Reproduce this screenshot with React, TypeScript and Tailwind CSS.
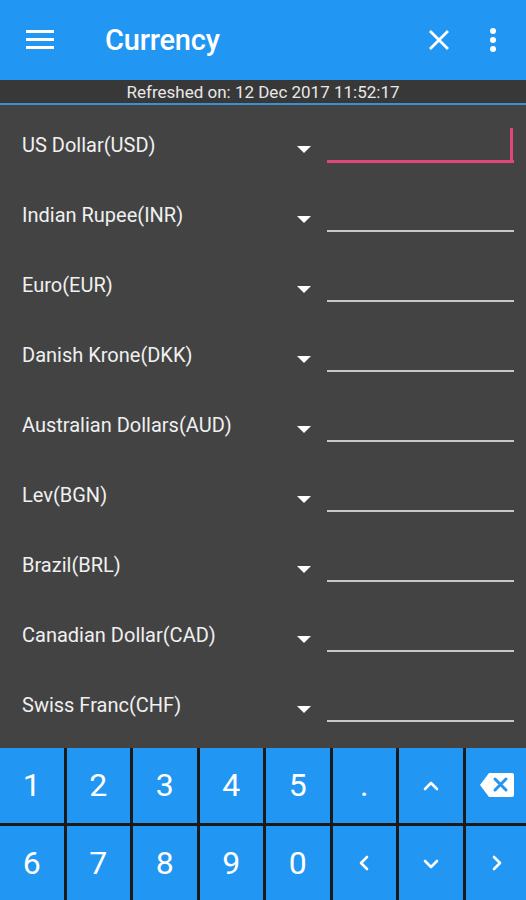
import React from 'react';

const currencies = [
  'US Dollar(USD)',
  'Indian Rupee(INR)',
  'Euro(EUR)',
  'Danish Krone(DKK)',
  'Australian Dollars(AUD)',
  'Lev(BGN)',
  'Brazil(BRL)',
  'Canadian Dollar(CAD)',
  'Swiss Franc(CHF)',
];

function Chevron({ dir }: { dir: 'up' | 'down' | 'left' | 'right' }) {
  const paths = {
    up: 'M4 14 L10 8 L16 14',
    down: 'M4 8 L10 14 L16 8',
    left: 'M13 4 L7 10 L13 16',
    right: 'M7 4 L13 10 L7 16',
  };
  return (
    <svg width="20" height="20" viewBox="0 0 20 20" fill="none">
      <path d={paths[dir]} stroke="white" strokeWidth="2.6" strokeLinecap="round" strokeLinejoin="round" />
    </svg>
  );
}

function Backspace() {
  return (
    <svg width="36" height="26" viewBox="0 0 36 26">
      <path d="M10 1 H33 a2 2 0 0 1 2 2 V23 a2 2 0 0 1 -2 2 H10 L1 13 Z" fill="white" />
      <path d="M16 7 L27 18 M27 7 L16 18" stroke="#2196F3" strokeWidth="3" strokeLinecap="round" />
    </svg>
  );
}

export default function App() {
  const row1: React.ReactNode[] = ['1', '2', '3', '4', '5', '.', <Chevron dir="up" />, <Backspace />];
  const row2: React.ReactNode[] = ['6', '7', '8', '9', '0', <Chevron dir="left" />, <Chevron dir="down" />, <Chevron dir="right" />];

  return (
    <div className="w-[526px] h-[900px] flex flex-col bg-[#434343] overflow-hidden" style={{ fontFamily: 'Roboto, "Noto Sans", sans-serif' }}>
      {/* Toolbar */}
      <div className="h-[80px] bg-[#2196F3] flex items-center text-white shrink-0">
        <div className="w-[80px] flex justify-center">
          <svg width="28" height="22" viewBox="0 0 28 22">
            <rect x="0" y="1" width="28" height="3" fill="white" />
            <rect x="0" y="9" width="28" height="3" fill="white" />
            <rect x="0" y="17" width="28" height="3" fill="white" />
          </svg>
        </div>
        <div className="ml-[25px] text-[29px] font-medium flex-1 mt-[2px] tracking-[-0.2px]">Currency</div>
        <svg width="22" height="22" viewBox="0 0 22 22" className="mr-[39px]">
          <path d="M2 2 L20 20 M20 2 L2 20" stroke="white" strokeWidth="2.8" />
        </svg>
        <svg width="8" height="26" viewBox="0 0 8 26" className="mr-[29px]">
          <circle cx="4" cy="4" r="3" fill="white" />
          <circle cx="4" cy="13" r="3" fill="white" />
          <circle cx="4" cy="22" r="3" fill="white" />
        </svg>
      </div>

      {/* Refreshed strip */}
      <div className="h-[23px] bg-[#383838] flex items-center justify-center text-[17px] text-[#e8e8e8] shrink-0 pt-[2px]">
        Refreshed on: 12 Dec 2017 11:52:17
      </div>
      <div className="h-[2px] bg-[#3d8fd0] shrink-0" />

      {/* Rows */}
      <div className="flex-1 pt-[10px]">
        {currencies.map((c, i) => (
          <div key={c} className="h-[70px] relative flex">
            <div className="pl-[22px] pt-[15px] text-[20px] text-[#f0f0f0] w-[290px] whitespace-nowrap">{c}</div>
            <div className="pt-[31px] w-[37px]">
              <svg width="14" height="8" viewBox="0 0 14 8" className="ml-[7px]">
                <path d="M0 0 H14 L7 7 Z" fill="white" />
              </svg>
            </div>
            <div className="pt-[45px]">
              <div className={i === 0 ? 'w-[187px] h-[3px] bg-[#e0457b]' : 'w-[187px] h-[2px] bg-[#c8c8c8]'} />
            </div>
            {i === 0 && <div className="absolute left-[510px] top-[13px] w-[3px] h-[33px] bg-[#e0457b]" />}
          </div>
        ))}
      </div>

      {/* Keypad */}
      <div className="h-[152px] bg-[#1a1a1a] grid grid-cols-8 grid-rows-2 gap-[3px] shrink-0 mr-[-3px]">
        {[...row1, ...row2].map((k, i) => (
          <div key={i} className="bg-[#2196F3] flex items-center justify-center text-white text-[32px]">
            {k}
          </div>
        ))}
      </div>
    </div>
  );
}
